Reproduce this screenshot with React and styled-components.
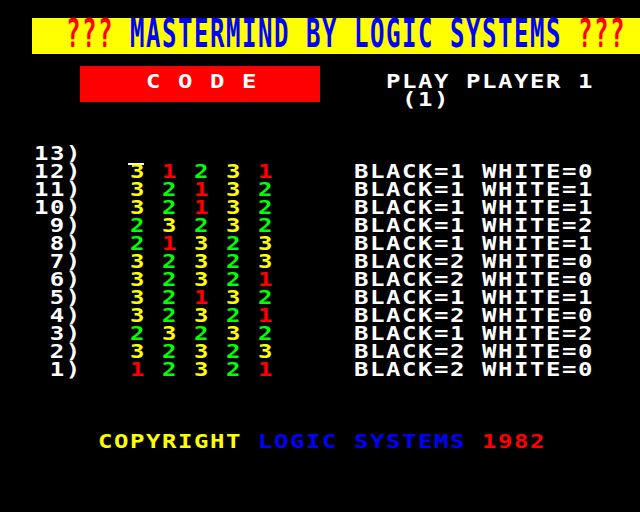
import React from "react";
import styled, { createGlobalStyle } from "styled-components";

const GlobalStyle = createGlobalStyle`
  html, body {
    margin: 0;
    padding: 0;
    background: #000;
  }
`;

const RED = "#ff0000";
const GREEN = "#00ff00";
const YELLOW = "#ffff00";
const BLUE = "#0000ff";
const WHITE = "#ffffff";

const pegColour = { 1: RED, 2: GREEN, 3: YELLOW };

// each character cell is 16px wide and 18px tall, like a mode 7 screen.
// glyphs are drawn 13.33px apart and then stretched 1.2x to fill the cell.
const Screen = styled.div`
  width: 640px;
  height: 512px;
  box-sizing: border-box;
  padding: 18px 0 0 2px;
  overflow: hidden;
  background: #000;
  color: ${WHITE};
  font-family: "DejaVu Sans Mono", "Liberation Mono", monospace;
  font-weight: bold;
  font-size: 20px;
  line-height: 18px;
  letter-spacing: 1.29px;
  white-space: pre;
`;

const Wide = styled.span`
  display: inline-block;
  transform: scaleX(1.2);
  transform-origin: ${(p) => (p.$right ? "100% 0" : "0 0")};
`;

const Ink = styled.span`
  color: ${(p) => p.$c};
`;

const TitleBar = styled.div`
  display: flex;
  align-items: flex-start;
  height: 36px;
  margin-left: 30px;
  padding-left: 34px;
  background: ${YELLOW};
`;

const Tall = styled.span`
  display: inline-block;
  line-height: 16px;
  transform: scale(1.2, 1.95);
  transform-origin: 0 0;
`;

const HeaderRow = styled.div`
  display: flex;
  align-items: flex-start;
  margin-top: 12px;
`;

const CodeBox = styled.div`
  box-sizing: border-box;
  width: 240px;
  height: 36px;
  margin-left: 78px;
  padding: 6px 0 0 66px;
  background: ${RED};
`;

const PlayBlock = styled.div`
  display: flex;
  flex-direction: column;
  align-items: flex-start;
  margin-left: 66px;
  padding-top: 6px;
`;

const Board = styled.div`
  margin-top: 36px;
`;

const BoardRow = styled.div`
  display: flex;
  height: 18px;
`;

const Label = styled.div`
  width: 80px;
  text-align: right;
`;

const Pegs = styled.div`
  display: flex;
  margin-left: 48px;
`;

const Peg = styled.div`
  position: relative;
  width: 32px;
  color: ${(p) => p.$c};
  &::before {
    content: "";
    display: ${(p) => (p.$cursor ? "block" : "none")};
    position: absolute;
    left: -2px;
    top: 1px;
    width: 16px;
    height: 2px;
    background: ${WHITE};
  }
`;

const Score = styled.div`
  margin-left: 64px;
`;

const Footer = styled.div`
  margin-top: 54px;
  padding-left: 96px;
`;

const guesses = [
  { n: 12, pegs: [3, 1, 2, 3, 1], black: 1, white: 0 },
  { n: 11, pegs: [3, 2, 1, 3, 2], black: 1, white: 1 },
  { n: 10, pegs: [3, 2, 1, 3, 2], black: 1, white: 1 },
  { n: 9, pegs: [2, 3, 2, 3, 2], black: 1, white: 2 },
  { n: 8, pegs: [2, 1, 3, 2, 3], black: 1, white: 1 },
  { n: 7, pegs: [3, 2, 3, 2, 3], black: 2, white: 0 },
  { n: 6, pegs: [3, 2, 3, 2, 1], black: 2, white: 0 },
  { n: 5, pegs: [3, 2, 1, 3, 2], black: 1, white: 1 },
  { n: 4, pegs: [3, 2, 3, 2, 1], black: 2, white: 0 },
  { n: 3, pegs: [2, 3, 2, 3, 2], black: 1, white: 2 },
  { n: 2, pegs: [3, 2, 3, 2, 3], black: 2, white: 0 },
  { n: 1, pegs: [1, 2, 3, 2, 1], black: 2, white: 0 },
];

const App = () => {
  return (
    <>
      <GlobalStyle />
      <Screen>
        <TitleBar>
          <Tall>
            <Ink $c={RED}>???</Ink>
            <Ink $c={BLUE}> MASTERMIND BY LOGIC SYSTEMS </Ink>
            <Ink $c={RED}>???</Ink>
          </Tall>
        </TitleBar>

        <HeaderRow>
          <CodeBox>
            <Wide>C O D E</Wide>
          </CodeBox>
          <PlayBlock>
            <Wide>PLAY PLAYER 1</Wide>
            <Wide> (1)</Wide>
          </PlayBlock>
        </HeaderRow>

        <Board>
          <BoardRow>
            <Label>
              <Wide $right>13)</Wide>
            </Label>
          </BoardRow>
          {guesses.map((g, i) => (
            <BoardRow key={g.n}>
              <Label>
                <Wide $right>{g.n})</Wide>
              </Label>
              <Pegs>
                {g.pegs.map((p, j) => (
                  <Peg key={j} $c={pegColour[p]} $cursor={i === 0 && j === 0}>
                    <Wide>{p}</Wide>
                  </Peg>
                ))}
              </Pegs>
              <Score>
                <Wide>
                  BLACK={g.black} WHITE={g.white}
                </Wide>
              </Score>
            </BoardRow>
          ))}
        </Board>

        <Footer>
          <Wide>
            <Ink $c={YELLOW}>COPYRIGHT </Ink>
            <Ink $c={BLUE}>LOGIC SYSTEMS </Ink>
            <Ink $c={RED}>1982</Ink>
          </Wide>
        </Footer>
      </Screen>
    </>
  );
};

export default App;
